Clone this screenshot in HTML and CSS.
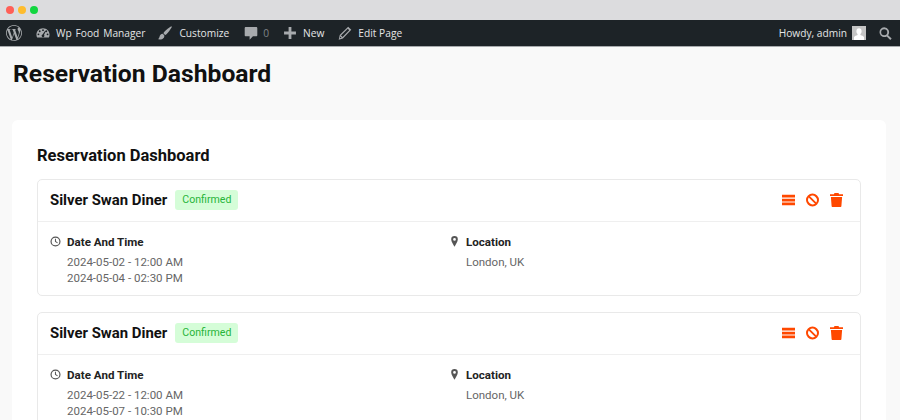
FILE: index.html
```html
<!DOCTYPE html>
<html lang="en">
<head>
<meta charset="utf-8">
<title>Reservation Dashboard</title>
<link rel="stylesheet" href="styles.css">
</head>
<body>
<div class="chrome"><span class="dot red"></span><span class="dot yellow"></span><span class="dot green"></span></div>
<nav class="adminbar">
  <div class="bar-group">
    <svg class="wp" viewBox="0 0 24 24"><path d="M21.469 6.825c.84 1.537 1.318 3.3 1.318 5.175 0 3.979-2.156 7.456-5.363 9.325l3.295-9.527c.615-1.54.82-2.771.82-3.864 0-.405-.026-.78-.07-1.11m-7.981.105c.647-.03 1.232-.105 1.232-.105.582-.075.514-.93-.067-.899 0 0-1.755.135-2.88.135-1.064 0-2.85-.15-2.85-.15-.585-.03-.661.855-.075.885 0 0 .54.061 1.125.09l1.68 4.605-2.37 7.08L5.354 6.9c.649-.03 1.234-.1 1.234-.1.585-.075.516-.93-.065-.896 0 0-1.746.138-2.874.138-.2 0-.438-.008-.69-.015C4.911 3.15 8.235 1.215 12 1.215c2.809 0 5.365 1.072 7.286 2.833-.046-.003-.091-.009-.141-.009-1.06 0-1.812.923-1.812 1.914 0 .89.513 1.643 1.06 2.531.411.72.89 1.643.89 2.977 0 .915-.354 1.994-.821 3.479l-1.075 3.585-3.9-11.61.001.014zM12 22.784c-1.059 0-2.081-.153-3.048-.437l3.237-9.406 3.315 9.087c.024.053.05.101.078.149-1.12.393-2.325.609-3.582.609M1.211 12c0-1.564.336-3.05.935-4.39L7.29 21.709C3.694 19.96 1.212 16.271 1.211 12M12 0C5.385 0 0 5.385 0 12s5.385 12 12 12 12-5.385 12-12S18.615 0 12 0"/></svg>
    <a class="bar-item site"><svg class="bar-icon" viewBox="0 0 20 20"><path fill-rule="evenodd" d="M10 3.2C4.8 3.2.6 7.3.6 12.4c0 1.500.4 2.900 1 4.100h16.800c.6-1.200 1-2.600 1-4.100 0-5.100-4.200-9.200-9.400-9.200zM5.300 6.200a1.300 1.300 0 1 1 0 2.600 1.300 1.300 0 0 1 0-2.600zM10 4.600a1.300 1.300 0 1 1 0 2.600 1.300 1.300 0 0 1 0-2.600zM14.700 6.200a1.300 1.300 0 1 1 0 2.600 1.300 1.300 0 0 1 0-2.600zM3.500 10.600a1.300 1.300 0 1 1 0 2.600 1.300 1.300 0 0 1 0-2.600zM16.500 10.600a1.300 1.300 0 1 1 0 2.600 1.300 1.300 0 0 1 0-2.600zM12.900 7.300l1 .6-2.400 4.700c.3.400.5.800.5 1.300a2 2 0 1 1-2.600-1.900z"/></svg>Wp Food Manager</a>
    <a class="bar-item custom"><svg class="bar-icon" viewBox="0 0 20 20"><path d="M19.300.6c.5.400.5 1 .1 1.600-1.500 2.600-4.800 7.300-7.300 9.500-.7.600-1.300 1-2 1.300L7.700 10.200c.3-.8.800-1.500 1.400-2.100 2.500-2.500 6.900-5.800 9.300-7.300.3-.3.600-.4.900-.2zM6.900 11.100l2.200 2.400c.1 2.500-1 4-2.700 4.900-1.900.9-4.300.9-6.400.6 1-.7 1.800-1.700 2.100-3.200.4-2.400 1.900-4.500 4.800-4.700z"/></svg>Customize</a>
    <a class="bar-item comments"><svg class="bar-icon" viewBox="0 0 20 20"><path d="M2.500 1.500h15c.8 0 1.500.7 1.500 1.500v10.300c0 .8-.7 1.500-1.500 1.500h-4.700l-4.800 4.700v-4.700H2.500c-.8 0-1.500-.7-1.500-1.500V3c0-.8.7-1.500 1.500-1.500z"/></svg><span class="muted">0</span></a>
    <a class="bar-item new"><svg class="bar-icon" viewBox="0 0 20 20"><path d="M8 1.500h4V8h6.500v4H12v6.500H8V12H1.500V8H8z"/></svg>New</a>
    <a class="bar-item edit"><svg class="bar-icon" viewBox="0 0 20 20"><path fill-rule="evenodd" d="M14.500 1l4.500 4.500L7 18l-6 1.500L2.500 13zM4.300 13.500l2.200 2.200 9.500-9.800-2-2zM3.300 15l-.7 2.500 2.500-.7z"/></svg>Edit Page</a>
  </div>
  <div class="bar-group">
    <span class="howdy">Howdy, admin</span>
    <svg class="avatar" viewBox="0 0 14 14"><rect width="14" height="14" fill="#c4c4c4"/><path fill="#fff" d="M7 2.300c1.700 0 2.600 1.300 2.600 3 0 1.200-.6 2.300-1.200 2.900v.8c1.500.5 3 1.100 3.600 2v3H2v-3c.6-.9 2.100-1.500 3.600-2v-.8C5 7.600 4.400 6.500 4.400 5.300c0-1.700.9-3 2.600-3z"/></svg>
    <svg class="search" viewBox="0 0 20 20"><path fill-rule="evenodd" d="M8 .5a7.500 7.500 0 0 1 6 12l5.500 5.300-2.200 2.200-5.400-5.400A7.500 7.500 0 1 1 8 .5zM8 3.300a4.700 4.700 0 1 0 0 9.400 4.700 4.700 0 0 0 0-9.400z"/></svg>
  </div>
</nav>
<main class="page">
  <h1 class="page-title">Reservation Dashboard</h1>
  <section class="panel">
    <h2 class="panel-title">Reservation Dashboard</h2>
    <article class="card">
      <header class="card-head">
        <div class="card-name"><h3>Silver Swan Diner</h3><span class="badge">Confirmed</span></div>
        <div class="actions">
          <svg viewBox="0 0 13 14"><path d="M0 1.800h13v2.700H0zM0 5.700h13v2.700H0zM0 9.600h13v2.700H0z"/></svg>
          <svg viewBox="0 0 14 14"><path fill-rule="evenodd" d="M7 0a7 7 0 1 1 0 14A7 7 0 0 1 7 0zM2.900 4.300a5 5 0 0 0 6.800 6.800zM4.300 2.900l6.800 6.800a5 5 0 0 0-6.800-6.800z"/></svg>
          <svg viewBox="0 0 13 14"><path d="M4.500 0h4l.6 1.300H13v1.600H0V1.300h3.900zM.9 4h11.200l-.7 9c0 .6-.5 1-1 1H2.600c-.5 0-1-.4-1-1z"/></svg>
        </div>
      </header>
      <div class="card-body">
        <div class="col">
          <h4><svg class="info-icon" viewBox="0 0 12 12"><path fill-rule="evenodd" d="M6 .5a5.500 5.500 0 1 1 0 11 5.500 5.500 0 0 1 0-11zm0 1.300a4.200 4.200 0 1 0 0 8.400 4.200 4.200 0 0 0 0-8.400zM5.400 3h1.100v2.800l2 1.200-.5.900-2.600-1.500z"/></svg>Date And Time</h4>
          <p>2024-05-02 - 12:00 AM</p>
          <p>2024-05-04 - 02:30 PM</p>
        </div>
        <div class="col">
          <h4><svg class="info-icon" viewBox="0 0 12 12"><path fill-rule="evenodd" d="M6 0a3.600 3.600 0 0 1 3.600 3.800c0 2.500-2.300 5.300-3.600 8-1.300-2.700-3.600-5.500-3.600-8A3.600 3.600 0 0 1 6 0zm0 2.200a1.500 1.500 0 1 0 0 3 1.500 1.500 0 0 0 0-3z"/></svg>Location</h4>
          <p>London, UK</p>
        </div>
      </div>
    </article>
    <article class="card">
      <header class="card-head">
        <div class="card-name"><h3>Silver Swan Diner</h3><span class="badge">Confirmed</span></div>
        <div class="actions">
          <svg viewBox="0 0 13 14"><path d="M0 1.800h13v2.700H0zM0 5.700h13v2.700H0zM0 9.600h13v2.700H0z"/></svg>
          <svg viewBox="0 0 14 14"><path fill-rule="evenodd" d="M7 0a7 7 0 1 1 0 14A7 7 0 0 1 7 0zM2.900 4.300a5 5 0 0 0 6.800 6.800zM4.300 2.900l6.800 6.800a5 5 0 0 0-6.800-6.800z"/></svg>
          <svg viewBox="0 0 13 14"><path d="M4.500 0h4l.6 1.300H13v1.600H0V1.300h3.900zM.9 4h11.200l-.7 9c0 .6-.5 1-1 1H2.600c-.5 0-1-.4-1-1z"/></svg>
        </div>
      </header>
      <div class="card-body">
        <div class="col">
          <h4><svg class="info-icon" viewBox="0 0 12 12"><path fill-rule="evenodd" d="M6 .5a5.500 5.500 0 1 1 0 11 5.500 5.500 0 0 1 0-11zm0 1.300a4.200 4.200 0 1 0 0 8.400 4.200 4.200 0 0 0 0-8.400zM5.400 3h1.100v2.800l2 1.200-.5.900-2.600-1.500z"/></svg>Date And Time</h4>
          <p>2024-05-22 - 12:00 AM</p>
          <p>2024-05-07 - 10:30 PM</p>
        </div>
        <div class="col">
          <h4><svg class="info-icon" viewBox="0 0 12 12"><path fill-rule="evenodd" d="M6 0a3.600 3.600 0 0 1 3.600 3.800c0 2.500-2.300 5.300-3.600 8-1.300-2.700-3.600-5.500-3.600-8A3.600 3.600 0 0 1 6 0zm0 2.200a1.500 1.500 0 1 0 0 3 1.500 1.500 0 0 0 0-3z"/></svg>Location</h4>
          <p>London, UK</p>
        </div>
      </div>
    </article>
  </section>
</main>
</body>
</html>
```
FILE: styles.css
```css
* { box-sizing: border-box; }
html, body { margin: 0; height: 420px; overflow: hidden; }
body { background: #f9f9f9; font-family: Roboto, sans-serif; color: #111; }

.chrome { height: 20px; background: #dcdcde; display: flex; align-items: center; gap: 4px; padding-left: 6px; }
.dot { width: 8px; height: 8px; border-radius: 50%; }
.red { background: #ff5f57; }
.yellow { background: #febc2e; }
.green { background: #12d63f; }

.adminbar { height: 27px; background: #1d2327; border-bottom: 1px solid #a7aaad; display: flex; justify-content: space-between; align-items: center; padding: 0 8px 0 6px; font-family: "Open Sans", sans-serif; font-size: 10.200px; color: #e4e5e6; }
.bar-group { display: flex; align-items: center; }
.wp { width: 16px; height: 16px; fill: #a7aaad; margin-right: 14px; }
.bar-item { display: flex; align-items: center; gap: 6px; margin-right: 14px; white-space: nowrap; }
.site { margin-right: 13px; word-spacing: 1.300px; }
.custom { gap: 7px; margin-right: 15px; }
.comments { gap: 5px; }
.bar-icon { width: 14px; height: 14px; fill: #a7aaad; }
.muted { color: #7f8488; }
.howdy { margin-right: 5px; }
.avatar { width: 14px; height: 14px; margin-right: 13px; }
.search { width: 13px; height: 13px; fill: #a7aaad; }

.page { padding: 0 14px 0 12px; }
.page-title { margin: 0; padding: 11px 0 0 1px; height: 73px; font-size: 24.700px; line-height: 31px; font-weight: 700; color: #111; }
.panel { background: #fff; border-radius: 6px; padding: 25px 25px 0; }
.panel-title { margin: 0 0 13px; font-size: 16.500px; line-height: 21px; font-weight: 700; color: #111; }

.card { border: 1px solid #e9e9e9; border-radius: 5px; margin-bottom: 16px; background: #fff; }
.card-head { height: 42px; display: flex; justify-content: space-between; align-items: center; padding: 0 17px 2px 12px; border-bottom: 1px solid #efefef; }
.card-name { display: flex; align-items: center; gap: 8px; }
.card-name h3 { margin: 0; font-size: 14.900px; font-weight: 700; color: #111; }
.badge { background: #d5fdd8; color: #27b53a; font-size: 10.600px; height: 20px; line-height: 20px; padding: 0 7px; border-radius: 3px; }
.actions { display: flex; align-items: center; gap: 11px; }
.actions svg { width: 13px; height: 14px; fill: #ff4800; }

.card-body { display: grid; grid-template-columns: 1fr 1fr; padding: 11.600px 12px 0; height: 73px; }
.col h4 { margin: 0 0 4px; font-size: 11.600px; line-height: 16px; font-weight: 700; color: #222; display: flex; align-items: center; gap: 6px; }
.col p { margin: 0 0 0 17px; font-size: 11.500px; line-height: 16.500px; color: #666; }
.info-icon { width: 11px; height: 11px; fill: #555; }
```
